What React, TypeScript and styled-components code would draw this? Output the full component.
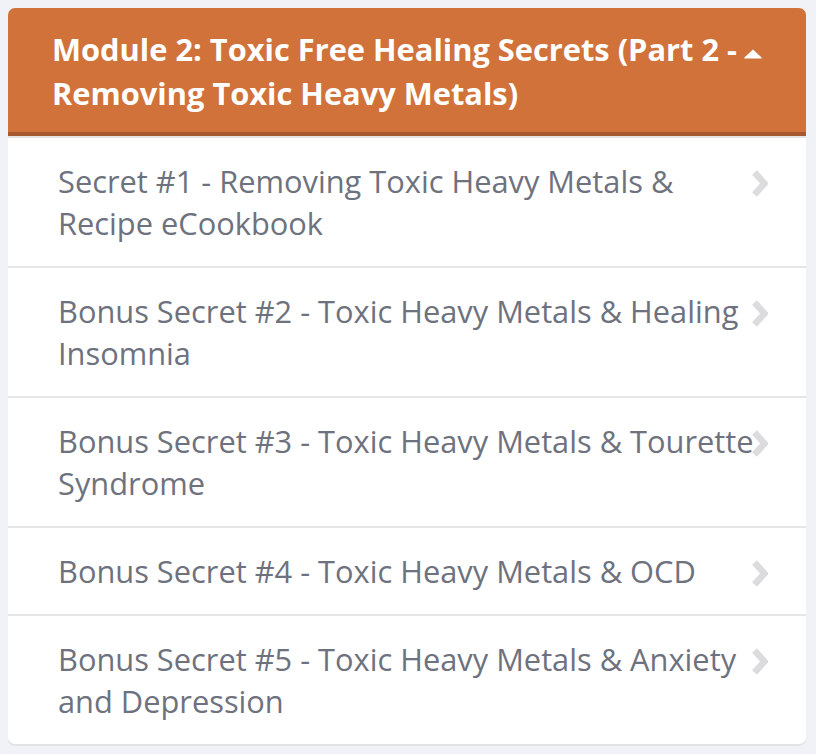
import React from 'react'
import styled, { createGlobalStyle } from 'styled-components'

const GlobalStyle = createGlobalStyle`
  body {
    margin: 0;
    background-color: #f1f2f7;
    font-family: 'Open Sans', 'Noto Sans', sans-serif;
  }
`

const Page = styled.div`
  padding: 8px 10px 8px 8px;
`

const Card = styled.section`
  background-color: #ffffff;
  border-radius: 7px;
  box-shadow: 0 2px 0 #e2e3e6;
  overflow: hidden;
`

const Header = styled.header`
  position: relative;
  background-color: #d0723a;
  border-bottom: 4px solid #a75a2d;
  box-shadow: 0 2px 0 #e6e3e1;
  padding: 19px 62px 17px 44px;
  color: #ffffff;
  font-size: 30.8px;
  font-weight: 700;
  line-height: 44px;
  margin-bottom: 2px;
`

const Caret = styled.svg`
  position: absolute;
  right: 43px;
  top: 41px;
  width: 20px;
  height: 10px;
`

const List = styled.ul`
  list-style: none;
  margin: 0;
  padding: 0;
`

const Item = styled.li<{ $last?: boolean }>`
  position: relative;
  padding: 22px 48px 22px 50px;
  font-size: 30.8px;
  line-height: 42px;
  color: #6e727e;
  border-bottom: ${props => (props.$last ? 'none' : '2px solid #e6e6e8')};
`

const Chevron = styled.svg`
  position: absolute;
  right: 38px;
  top: 32px;
  width: 18px;
  height: 27px;
`

const lessons = [
  'Secret #1 - Removing Toxic Heavy Metals & Recipe eCookbook',
  'Bonus Secret #2 - Toxic Heavy Metals & Healing Insomnia',
  'Bonus Secret #3 - Toxic Heavy Metals & Tourette Syndrome',
  'Bonus Secret #4 - Toxic Heavy Metals & OCD',
  'Bonus Secret #5 - Toxic Heavy Metals & Anxiety and Depression',
]

function App() {
  return (
    <Page>
      <GlobalStyle />
      <Card>
        <Header>
          Module 2: Toxic Free Healing Secrets (Part 2 - Removing Toxic Heavy Metals)
          <Caret viewBox="0 0 20 10">
            <path d="M10 0.5 L18.6 8.6 Q19.4 9.5 18.2 9.5 L1.8 9.5 Q0.6 9.5 1.4 8.6 Z" fill="#ffffff" />
          </Caret>
        </Header>
        <List>
          {lessons.map((title, i) => (
            <Item key={title} $last={i === lessons.length - 1}>
              {title}
              <Chevron viewBox="0 0 18 27">
                <path d="M4.5 2.5 L14.5 13.5 L4.5 24.5" stroke="#dcdcdf" strokeWidth="6.5" fill="none" strokeLinejoin="miter" />
              </Chevron>
            </Item>
          ))}
        </List>
      </Card>
    </Page>
  )
}

export default App
